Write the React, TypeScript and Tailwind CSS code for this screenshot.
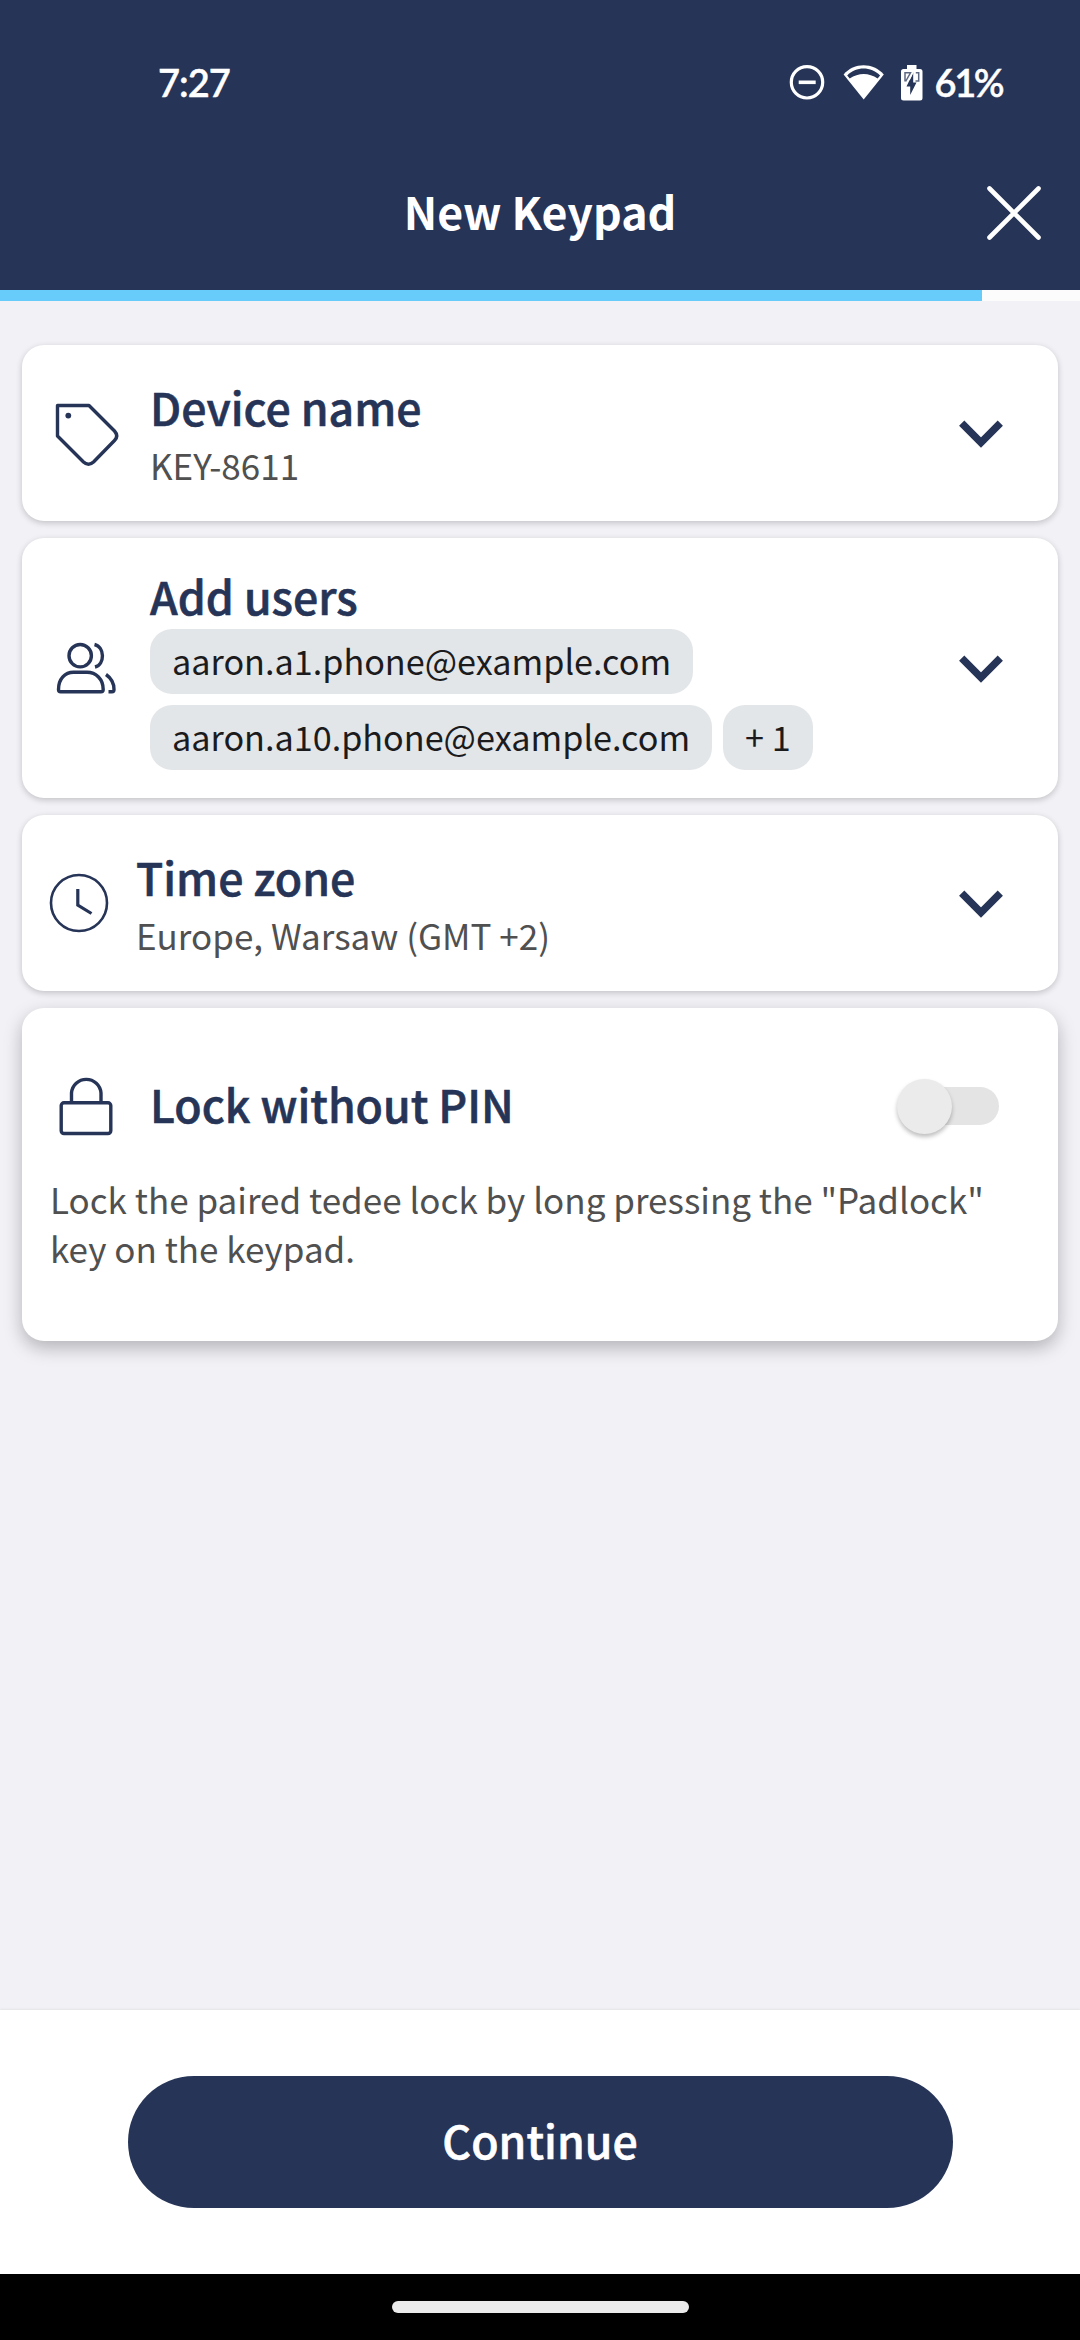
import React from "react";

const NAVY = "#263457";

function Icon({ w, h, children, className = "" }: { w: number; h: number; children: React.ReactNode; className?: string }) {
  return (
    <svg width={w} height={h} viewBox={`0 0 ${w} ${h}`} fill="none" className={"block shrink-0 " + className}>
      {children}
    </svg>
  );
}

function StatusBar() {
  return (
    <div className="flex h-[126px] items-start justify-between pr-[78px] pl-[158px] pt-[59px] font-['Lato'] text-[38px] leading-[46px] font-semibold text-white [-webkit-text-stroke:0.4px_white]">
      <span className="tracking-[-1px]">7:27</span>
      <div className="flex items-start">
        <Icon w={36} h={36} className="mt-[5px]">
          <circle cx="18" cy="18.300" r="15.700" stroke="#fff" strokeWidth="3.200" />
          <path d="M9.700 18.300H26.700" stroke="#fff" strokeWidth="3.600" />
        </Icon>
        <Icon w={42} h={36} className="mt-[6px] ml-[18px]">
          <path d="M0.600 9.500C11 -2.800 30 -2.800 40.800 9.500L20.700 34.500Z" fill="#fff" />
          <path d="M4.200 10.500C13 1.300 28 1.300 37.100 10.500L34.600 13.600C26 7.400 15.500 7.400 6.700 13.600Z" fill={NAVY} />
        </Icon>
        <Icon w={22} h={38} className="mt-[5px] ml-[16px]">
          <path d="M6 1h9.500v4H19q2.500 0 2.500 2.500v26.500q0 2.500-2.500 2.500H2.500q-2.500 0-2.500-2.500V7.500Q0 5 2.500 5H6z" fill="#fff" />
          <path d="M4 17.500V8.800H9.500L4.600 17.500M14.800 8.800H17.700V17H14.500" stroke={NAVY} strokeOpacity="0.75" strokeWidth="1.500" />
          <path d="M12.200 8.500L5.500 22.500H9.200V31L15.500 18.500H12.200Z" fill={NAVY} />
          <path d="M11.600 9L8.200 16" stroke="#fff" strokeWidth="1.300" />
        </Icon>
        <span className="ml-[12px] tracking-[-2.500px]">61%</span>
      </div>
    </div>
  );
}

function Chevron() {
  return (
    <Icon w={48} h={32} className="mr-[53px] mt-[2px]">
      <path d="M4.700 5.200L24 24.500L43.300 5.200" stroke={NAVY} strokeWidth="7.400" />
    </Icon>
  );
}

function Chip({ children }: { children: React.ReactNode }) {
  return (
    <span className="flex h-[65px] items-center rounded-[22px] bg-[#e3e6e9] px-[22px] pb-[3px] text-[34.200px] leading-[52px] whitespace-nowrap text-[#1b1b1d]">
      {children}
    </span>
  );
}

const titleClass = "text-[44.600px] leading-[58px] font-medium text-[#263457] whitespace-nowrap [-webkit-text-stroke:0.6px_#263457]";
const subClass = "text-[35px] leading-[58px] text-[#505050] whitespace-nowrap";
const cardClass = "flex items-center rounded-[22px] bg-white shadow-[0_2px_6px_rgba(0,0,0,0.2)]";

export default function App() {
  return (
    <div className="flex h-[2340px] w-[1080px] flex-col overflow-hidden bg-[#f2f1f6] font-['Noto_Sans_CJK_SC',sans-serif]">
      <header className="h-[290px] shrink-0 bg-[#263457]">
        <StatusBar />
        <div className="grid h-[174px] grid-cols-[1fr_auto_1fr] items-center">
          <h1 className="col-start-2 pb-[4px] text-[44.700px] leading-[60px] font-bold text-white">New Keypad</h1>
          <Icon w={56} h={56} className="mr-[38px] justify-self-end">
            <path d="M3.500 3.500L52.500 52.500M52.500 3.500L3.500 52.500" stroke="#fff" strokeWidth="4.600" strokeLinecap="round" />
          </Icon>
        </div>
      </header>
      <div className="h-[11px] shrink-0 bg-[#fcfcfc]">
        <div className="h-full w-[982px] bg-[#67ccf9]" />
      </div>

      <main className="flex flex-1 flex-col px-[22px] pt-[44px]">
        <section className={cardClass + " h-[176px]"}>
          <Icon w={68} h={68} className="ml-[30px]">
            <path d="M5.500 6.500H37L62.500 32Q67 37 62.500 41.500L41.500 63Q36.500 67.500 31.500 63L5.500 37Z" stroke={NAVY} strokeWidth="3.400" strokeLinejoin="round" />
            <circle cx="16.300" cy="16.600" r="2.900" fill={NAVY} />
          </Icon>
          <div className="ml-[30px] flex-1 pt-[6px]">
            <h2 className={titleClass}>Device name</h2>
            <p className={subClass}>KEY-8611</p>
          </div>
          <Chevron />
        </section>

        <section className={cardClass + " mt-[17px] h-[260px]"}>
          <Icon w={68} h={68} className="ml-[30px]">
            <g stroke={NAVY} strokeWidth="3.400" strokeLinejoin="round">
              <circle cx="28.200" cy="21.700" r="11.200" />
              <path d="M42.500 10.500C53 13 53 30.500 43 33" />
              <path d="M6.500 55.500C6.500 45 13 38.300 21.500 38.300H35C44 38.300 51.200 45 51.200 55.500Q51.200 57.700 49 57.700H8.700Q6.500 57.700 6.500 55.500Z" />
              <path d="M54 40.500C59 44 62 50 62 55.500Q62 57.700 60 57.700H56.500" />
            </g>
          </Icon>
          <div className="ml-[30px] flex-1">
            <h2 className={titleClass + " pb-[4px]"}>Add users</h2>
            <div className="flex flex-col items-start gap-[11px]">
              <Chip>aaron.a1.phone@example.com</Chip>
              <div className="flex gap-[11px]">
                <Chip>aaron.a10.phone@example.com</Chip>
                <Chip>+ 1</Chip>
              </div>
            </div>
          </div>
          <Chevron />
        </section>

        <section className={cardClass + " mt-[17px] h-[176px]"}>
          <Icon w={60} h={60} className="ml-[27px]">
            <circle cx="30" cy="30" r="28" stroke={NAVY} strokeWidth="2.600" />
            <path d="M28.800 16V32L42.500 40.500" stroke={NAVY} strokeWidth="3.200" />
          </Icon>
          <div className="ml-[27px] flex-1 pt-[6px]">
            <h2 className={titleClass}>Time zone</h2>
            <p className={subClass}>Europe, Warsaw (GMT +2)</p>
          </div>
          <Chevron />
        </section>

        <section className="mt-[17px] h-[333px] rounded-[22px] bg-white pt-[58px] shadow-[0_7px_18px_rgba(0,0,0,0.26)]">
          <div className="flex h-[80px] items-center">
            <Icon w={68} h={68} className="ml-[30px]">
              <g stroke={NAVY} strokeWidth="3.400">
                <path d="M19.500 30.500V21A14.800 14.800 0 0 1 49 21V30.500" />
                <rect x="9.200" y="30.800" width="49.600" height="30.700" rx="2.800" />
              </g>
            </Icon>
            <h2 className={titleClass + " ml-[30px] flex-1 pb-[4px]"}>Lock without PIN</h2>
            <div className="mr-[59px] flex h-[38px] w-[94px] items-center rounded-full bg-[#e4e4e4]">
              <div className="-ml-[8px] h-[55px] w-[55px] shrink-0 rounded-full bg-[#ebebeb] shadow-[0_3px_4px_rgba(0,0,0,0.25)]" />
            </div>
          </div>
          <p className="mt-[28px] ml-[28px] text-[35px] leading-[49px] text-[#505050]">
            Lock the paired tedee lock by long pressing the "Padlock"
            <br />
            key on the keypad.
          </p>
        </section>
      </main>

      <footer className="flex h-[264px] shrink-0 items-center justify-center bg-white shadow-[0_-1px_2px_rgba(0,0,0,0.06)]">
        <button className="h-[132px] w-[825px] rounded-full bg-[#263457] pb-[5px] text-[44.600px] leading-[60px] font-medium text-white [-webkit-text-stroke:0.6px_white]">Continue</button>
      </footer>
      <div className="flex h-[66px] shrink-0 items-center justify-center bg-black">
        <div className="h-[12px] w-[297px] rounded-full bg-[#ebebeb]" />
      </div>
    </div>
  );
}
